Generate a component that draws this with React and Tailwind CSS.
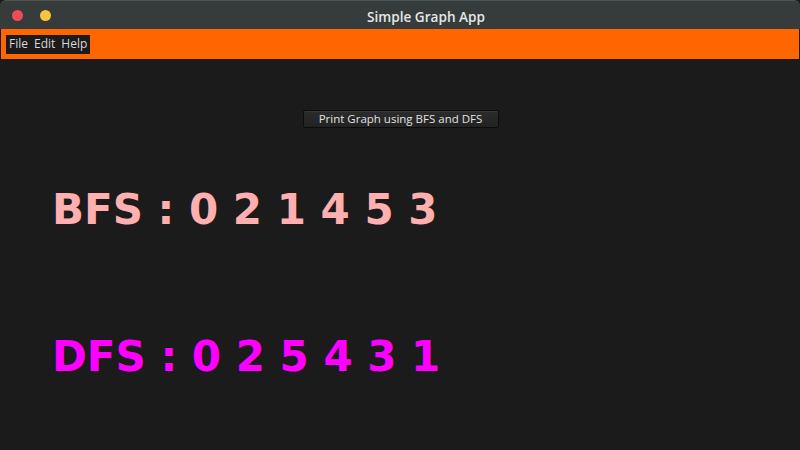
export default function App() {
  return (
    <div className="w-[800px] h-[450px] bg-[#1b1b1b] overflow-hidden flex flex-col" style={{ fontFamily: '"DejaVu Sans", sans-serif' }}>
      <div className="h-[29px] bg-[#363c3b] rounded-t-[6px] border-t border-[#4f5554] flex items-center relative shrink-0">
        <div className="flex items-center gap-[17px] pl-[12px]">
          <div className="w-[11px] h-[11px] rounded-full bg-[#ee4c56]" />
          <div className="w-[11px] h-[11px] rounded-full bg-[#f8c43b]" />
        </div>
        <div className="absolute left-[367px] top-[6px] text-[13.6px] text-[#e6e6e6]" style={{ fontFamily: '"Open Sans", sans-serif', fontWeight: 600 }}>Simple Graph App</div>
      </div>
      <div className="h-[30px] bg-[#ff6600] mx-[1px] flex items-center pl-[5px] shrink-0">
        <div className="bg-[#1b1b1b] h-[19px] flex items-center gap-[6px] px-[3px] text-[12px] text-[#d8d8d8]" style={{ fontFamily: '"Open Sans", sans-serif' }}>
          <span>File</span><span>Edit</span><span>Help</span>
        </div>
      </div>
      <div className="flex-1 flex flex-col">
        <div className="flex justify-center pt-[51px] pl-[1px]">
          <div className="w-[196px] h-[18px] rounded-[2px] border border-[#0c0c0c] bg-gradient-to-b from-[#2c2c2c] to-[#222] shadow-[inset_0_1px_0_#383838] flex items-center justify-center text-[11.5px] text-[#e2e2e2]" style={{ fontFamily: '"Open Sans", sans-serif' }}>
            Print Graph using BFS and DFS
          </div>
        </div>
        <div className="pl-[52px] mt-[52px] text-[42px] font-bold text-[#ffafaf] leading-[60px] whitespace-pre">BFS : 0 2 1 4 5 3</div>
        <div className="pl-[52px] mt-[87px] text-[42px] font-bold text-[#ff00ff] leading-[60px] whitespace-pre">DFS : 0 2 5 4 3 1</div>
      </div>
    </div>
  );
}
